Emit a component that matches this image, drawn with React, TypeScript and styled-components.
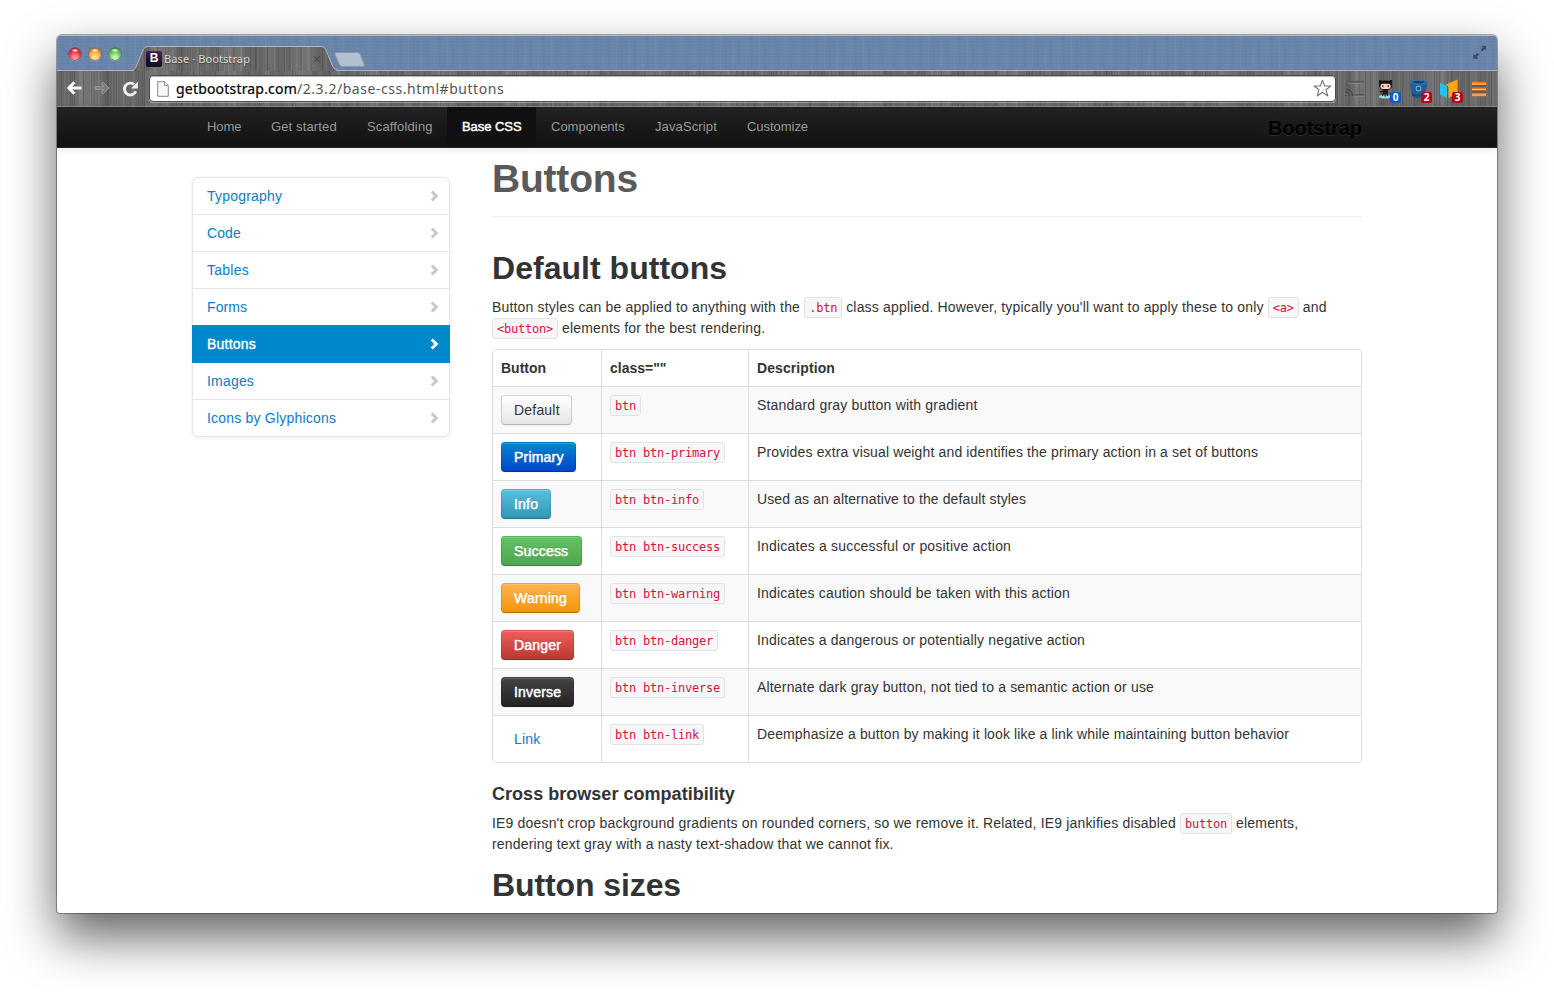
import React from "react";
import styled, { createGlobalStyle, css } from "styled-components";

const GlobalStyle = createGlobalStyle`
  * { box-sizing: border-box; }
  body { margin: 0; background: #fff; overflow: hidden; }
  #root { height: 992px; }
`;

const sans = `"Liberation Sans", Arial, sans-serif`;
const ui = `"Noto Sans", "Open Sans", sans-serif`;
const mono = `"DejaVu Sans Mono", "Liberation Mono", monospace`;

const brushed = css`
  background-color: #727272;
  background-image:
    repeating-linear-gradient(90deg, rgba(255,255,255,.06) 0 1px, transparent 1px 4px, rgba(0,0,0,.1) 4px 5px, transparent 5px 11px),
    repeating-linear-gradient(90deg, rgba(0,0,0,.1) 0 1px, transparent 1px 7px, rgba(255,255,255,.06) 7px 9px, transparent 9px 17px),
    repeating-linear-gradient(90deg, transparent 0 13px, rgba(0,0,0,.14) 13px 14px, transparent 14px 23px, rgba(255,255,255,.07) 23px 24px, transparent 24px 37px),
    repeating-linear-gradient(90deg, rgba(0,0,0,.1) 0 16px, transparent 22px 38px, rgba(0,0,0,.12) 46px 60px, rgba(0,0,0,.04) 66px 71px);
`;

const Desktop = styled.div`
  width: 1554px;
  height: 992px;
  padding: 35px 57px 0 57px;
  overflow: hidden;
`;

const Window = styled.main`
  height: 878px;
  border-radius: 5px 5px 3px 3px;
  overflow: hidden;
  background: #fff;
  display: flex;
  flex-direction: column;
  box-shadow: 0 0 0 1px rgba(0, 0, 0, .32), 0 24px 50px rgba(0, 0, 0, .62);
`;

const TabStrip = styled.header`
  flex: none;
  height: 36px;
  display: flex;
  align-items: flex-end;
  padding: 0 9px 0 12px;
  border-top: 1px solid #b9bcc0;
  background-color: #6883aa;
  background-image:
    repeating-linear-gradient(90deg, rgba(255,255,255,.03) 0 1px, transparent 1px 5px, rgba(0,0,0,.025) 5px 7px, transparent 7px 13px),
    repeating-linear-gradient(0deg, rgba(255,255,255,.03) 0 1px, transparent 1px 3px);
  box-shadow: inset 0 -1px #aeb3ba;
`;

const Lights = styled.div`
  display: flex;
  gap: 8px;
  width: 62px;
  padding-bottom: 11px;
`;

const Light = styled.span<{ $c: string; $dark: string; $lit: string }>`
  width: 12px;
  height: 12px;
  border-radius: 50%;
  background:
    radial-gradient(ellipse 4px 2px at 50% 20%, rgba(255,255,255,.95), rgba(255,255,255,0)),
    radial-gradient(circle at 50% 80%, ${p => p.$lit} 10%, ${p => p.$c} 55%, ${p => p.$dark} 100%);
  box-shadow: 0 0 0 .5px ${p => p.$dark}, 0 1px 1px rgba(255, 255, 255, .4);
`;

const Tab = styled.div`
  position: relative;
  width: 208px;
  height: 25px;
  display: flex;
  align-items: center;
  padding: 0 18px 0 15px;
`;

const TabSurface = styled.div`
  position: absolute;
  inset: 0;
  ${brushed}
  clip-path: path("M0 25 C3 25 4 23 5 21 L12 4 Q13.5 .5 17 .5 L190 .5 Q194 .5 195 4 L202 21 Q203.500 25 208 25 Z");
`;

const TabEdge = styled.svg`
  position: absolute;
  inset: 0;
`;

const TabTitle = styled.span`
  position: relative;
  flex: 1;
  padding-left: 2px;
  font: 11px/16px ${ui};
  letter-spacing: .1px;
  color: #dcdcdc;
  text-shadow: 0 1px 1px rgba(0, 0, 0, .4);
`;

const Favicon = styled.span`
  position: relative;
  width: 16px;
  height: 16px;
  border-radius: 2px;
  background: linear-gradient(200deg, #5a2358, #160a28 70%);
  color: #fff;
  font: bold 12px/15px ${sans};
  text-align: center;
`;

const Icon = styled.svg`
  position: relative;
  flex: none;
  display: block;
`;

const NewTab = styled(Icon)`
  margin: 0 auto 3px -6px;
`;

const Expand = styled(Icon)`
  margin-bottom: 11px;
`;

const Toolbar = styled.div`
  flex: none;
  height: 36px;
  display: flex;
  align-items: center;
  padding: 0 10px 0 9px;
  ${brushed}
  border-bottom: 1px solid #8a8a8a;
`;

const NavButtons = styled.div`
  display: flex;
  gap: 12px;
  width: 83px;
`;

const Omnibox = styled.div`
  width: 1187px;
  height: 27px;
  margin-right: 8px;
  display: flex;
  align-items: center;
  padding: 0 3px 0 7px;
  border: 1px solid #4c4c4c;
  border-radius: 4px;
  background: #fff;
  box-shadow: inset 0 1px 1px rgba(0, 0, 0, .3), 0 1px rgba(255, 255, 255, .35);
`;

const Url = styled.div`
  flex: 1;
  padding-left: 7px;
  font: 14px/20px ${ui};
  letter-spacing: .54px;
  color: #555;
  b { font-weight: 400; color: #000; letter-spacing: .19px; -webkit-text-stroke: .2px #000; }
`;

const Extensions = styled.div`
  display: flex;
  align-items: center;
`;

const Extension = styled.div<{ $w: number }>`
  position: relative;
  width: ${p => p.$w}px;
  height: 24px;
  display: flex;
  align-items: center;
`;

const Badge = styled.span<{ $c: string }>`
  position: absolute;
  left: 12px;
  bottom: -2px;
  width: 11px;
  height: 11px;
  border-radius: 2px;
  background: ${p => p.$c};
  color: #fff;
  font: bold 10px/11px ${ui};
  text-align: center;
`;

const Navbar = styled.nav`
  flex: none;
  height: 41px;
  display: flex;
  padding: 0 135px;
  background: linear-gradient(#222, #111);
  border-bottom: 1px solid #252525;
  box-shadow: 0 1px 10px rgba(0, 0, 0, .1);
  font: 13px/20px ${sans};
  z-index: 1;
`;

const NavItem = styled.a<{ $w: number; $ls: number; $active?: boolean }>`
  width: ${p => p.$w}px;
  padding: 10px 0 10px 15px;
  white-space: nowrap;
  letter-spacing: ${p => p.$ls}px;
  color: ${p => (p.$active ? "#fff" : "#999")};
  ${p => p.$active && css`
    background: #111;
    box-shadow: inset 0 3px 8px rgba(0, 0, 0, .125);
    -webkit-text-stroke: .45px #fff;
  `}
`;

const Brand = styled.a`
  margin-left: auto;
  padding: 11px 0 0;
  font: bold 20px/20px ${sans};
  letter-spacing: -.05px;
  color: #000;
  text-shadow: 0 1px 0 rgba(255, 255, 255, .1), 0 0 30px rgba(255, 255, 255, .125);
`;

const Page = styled.div`
  flex: 1;
  min-height: 0;
  overflow: hidden;
  display: flex;
  align-items: flex-start;
  gap: 42px;
  padding-left: 135px;
  font: 14px/20px ${sans};
  color: #333;
`;

const SideNav = styled.aside`
  width: 258px;
  margin-top: 29px;
  border-radius: 6px;
  box-shadow: 0 1px 4px rgba(0, 0, 0, .065);
`;

const SideLink = styled.a<{ $active?: boolean; $ls: number }>`
  display: flex;
  justify-content: space-between;
  align-items: center;
  height: 38px;
  padding: 0 10px 0 14px;
  border: 1px solid #e5e5e5;
  color: #0a7cc6;
  letter-spacing: ${p => p.$ls}px;
  & + & { margin-top: -1px; }
  &:first-child { border-radius: 6px 6px 0 0; }
  &:last-child { border-radius: 0 0 6px 6px; }
  ${p => p.$active && css`
    position: relative;
    z-index: 2;
    background: #08c;
    border-color: #08c;
    color: #fff;
    -webkit-text-stroke: .4px #fff;
    text-shadow: 0 1px 0 rgba(0, 0, 0, .15);
  `}
`;

const Article = styled.article`
  width: 870px;
`;

const Title = styled.h1`
  margin: 0;
  height: 69px;
  padding-top: 11px;
  border-bottom: 1px solid #eee;
  font: bold 39px/40px ${sans};
  letter-spacing: -.2px;
  color: #5a5a5a;
`;

const Heading = styled.h2<{ $top: number; $ls: number }>`
  margin: ${p => p.$top}px 0 9px;
  font: bold 32px/40px ${sans};
  letter-spacing: ${p => p.$ls}px;
`;

const SubHeading = styled.h4`
  margin: 21px 0 9px;
  font: bold 18px/20px ${sans};
  letter-spacing: .03px;
`;

const Line = styled.p`
  margin: 0;
  height: 21px;
  line-height: 21px;
  white-space: nowrap;
  letter-spacing: .172px;
`;

const Code = styled.code`
  display: inline-block;
  vertical-align: top;
  height: 21px;
  padding: 2px 4px;
  border: 1px solid #e1e1e8;
  border-radius: 3px;
  background: #f7f7f9;
  color: #d9103c;
  font: 12px/16px ${mono};
  letter-spacing: -.225px;
  white-space: pre;
`;

const Table = styled.div`
  margin-top: 10px;
  border: 1px solid #ddd;
  border-radius: 4px;
  overflow: hidden;
`;

const Row = styled.div<{ $odd?: boolean; $head?: boolean }>`
  display: grid;
  grid-template-columns: 108px 147px 1fr;
  height: ${p => (p.$head ? 36 : 47)}px;
  border-top: ${p => (p.$head ? "0" : "1px solid #ddd")};
  background: ${p => (p.$odd ? "#f9f9f9" : "#fff")};
  font-weight: ${p => (p.$head ? "bold" : "normal")};
`;

const Cell = styled.div<{ $ls?: number }>`
  padding: 8px;
  white-space: nowrap;
  letter-spacing: ${p => p.$ls ?? 0}px;
  & + & { border-left: 1px solid #ddd; }
`;

type Tone = { from: string; to: string; edge: string };

const Button = styled.button<{ $tone: Tone; $w: number; $kind: "light" | "solid" | "link" }>`
  display: block;
  width: ${p => p.$w}px;
  height: 30px;
  padding: 0 0 0 12px;
  border: 1px solid ${p => p.$tone.edge};
  border-radius: 4px;
  background: linear-gradient(${p => p.$tone.from}, ${p => p.$tone.to});
  font: 14px/20px ${sans};
  letter-spacing: .2px;
  text-align: left;
  white-space: nowrap;
  ${p => p.$kind === "light" && css`
    color: #333;
    border-color: #d4d4d4 #ccc #b3b3b3;
    text-shadow: 0 1px 1px rgba(255, 255, 255, .75);
    box-shadow: inset 0 1px 0 rgba(255, 255, 255, .2), 0 1px 2px rgba(0, 0, 0, .05);
  `}
  ${p => p.$kind === "solid" && css`
    color: #fff;
    -webkit-text-stroke: .5px #fff;
    border-color: rgba(0, 0, 0, .1) rgba(0, 0, 0, .1) rgba(0, 0, 0, .25);
    background-clip: border-box;
    background-origin: border-box;
    text-shadow: 0 -1px 0 rgba(0, 0, 0, .25);
    box-shadow: inset 0 1px 0 rgba(255, 255, 255, .2), 0 1px 2px rgba(0, 0, 0, .05);
  `}
  ${p => p.$kind === "link" && css`
    color: #0a7cc6;
    background: none;
    border-color: transparent;
  `}
`;

const navItems = [
  { label: "Home", w: 64, ls: -0.1 },
  { label: "Get started", w: 96, ls: 0.13 },
  { label: "Scaffolding", w: 95, ls: 0.14 },
  { label: "Base CSS", w: 89, ls: -0.05, active: true },
  { label: "Components", w: 104, ls: 0 },
  { label: "JavaScript", w: 92, ls: 0.12 },
  { label: "Customize", w: 91, ls: -0.04 },
];

const sideItems = [
  { label: "Typography", ls: 0.2 },
  { label: "Code", ls: 0.1 },
  { label: "Tables", ls: 0.24 },
  { label: "Forms", ls: 0.1 },
  { label: "Buttons", ls: 0.22, active: true },
  { label: "Images", ls: 0.19 },
  { label: "Icons by Glyphicons", ls: 0.2 },
];

type Kind = "light" | "solid" | "link";
const rows: { label: string; cls: string; text: string; ls: number; w: number; kind: Kind; tone: Tone }[] = [
  { label: "Default", cls: "btn", text: "Standard gray button with gradient", ls: 0.19, w: 71, kind: "light", tone: { from: "#fff", to: "#e6e6e6", edge: "#ccc" } },
  { label: "Primary", cls: "btn btn-primary", text: "Provides extra visual weight and identifies the primary action in a set of buttons", ls: 0.142, w: 75, kind: "solid", tone: { from: "#08c", to: "#04c", edge: "#04c" } },
  { label: "Info", cls: "btn btn-info", text: "Used as an alternative to the default styles", ls: 0.12, w: 50, kind: "solid", tone: { from: "#5bc0de", to: "#2f96b4", edge: "#2f96b4" } },
  { label: "Success", cls: "btn btn-success", text: "Indicates a successful or positive action", ls: 0.2, w: 81, kind: "solid", tone: { from: "#62c462", to: "#51a351", edge: "#51a351" } },
  { label: "Warning", cls: "btn btn-warning", text: "Indicates caution should be taken with this action", ls: 0.19, w: 79, kind: "solid", tone: { from: "#fbb450", to: "#f89406", edge: "#f89406" } },
  { label: "Danger", cls: "btn btn-danger", text: "Indicates a dangerous or potentially negative action", ls: 0.172, w: 73, kind: "solid", tone: { from: "#ee5f5b", to: "#bd362f", edge: "#bd362f" } },
  { label: "Inverse", cls: "btn btn-inverse", text: "Alternate dark gray button, not tied to a semantic action or use", ls: 0.173, w: 73, kind: "solid", tone: { from: "#444", to: "#222", edge: "#222" } },
  { label: "Link", cls: "btn btn-link", text: "Deemphasize a button by making it look like a link while maintaining button behavior", ls: 0.127, w: 53, kind: "link", tone: { from: "#fff", to: "#fff", edge: "#fff" } },
];

const Chevron = ({ active }: { active?: boolean }) => (
  <Icon width="9" height="12" viewBox="0 0 9 12">
    <path d="M1.700 1.500 6.300 6 1.700 10.500" fill="none" stroke={active ? "#fff" : "#c8c8c8"} strokeWidth="3" />
  </Icon>
);

const Arrow = ({ dim }: { dim?: boolean }) => (
  <Icon width="16" height="16" viewBox="0 0 16 16">
    <path
      d={dim ? "M1 6.500H10L7 3.800 8.800 1.900 15 8 8.800 14.100 7 12.200 10 9.500H1Z" : "M15.500 8H3M8.500 2.200 2.600 8l5.900 5.800"}
      fill={dim ? "#7c7c7c" : "none"}
      stroke={dim ? "#989898" : "#f6f6f6"}
      strokeWidth={dim ? 1 : 3}
      strokeLinejoin="round"
    />
  </Icon>
);

const TopChrome = () => (
  <>
    <TabStrip>
      <Lights>
        <Light $c="#e8323c" $dark="#8c0c18" $lit="#ff9aa0" />
        <Light $c="#f2a634" $dark="#92560c" $lit="#ffe38c" />
        <Light $c="#62c254" $dark="#2c7426" $lit="#c8f8b0" />
      </Lights>
      <Tab>
        <TabSurface />
        <TabEdge width="208" height="25" viewBox="0 0 208 25">
          <path d="M0 24.500C3 24.500 4 23 5 21L12 4Q13.500 .5 17 .5H190Q194 .5 195 4L202 21Q203.500 24.500 208 24.500" fill="none" stroke="#b4b7bb" />
        </TabEdge>
        <Favicon>B</Favicon>
        <TabTitle>Base · Bootstrap</TabTitle>
        <Icon width="8" height="8" viewBox="0 0 8 8">
          <path d="M.8.8 7.200 7.200M7.200.8.8 7.200" stroke="#484848" strokeWidth="1.100" />
        </Icon>
      </Tab>
      <NewTab width="33" height="17" viewBox="0 0 33 17">
        <path d="M3.500 1.500H24Q26.500 1.500 27.300 3.500L31.200 13.500Q31.700 15.500 30 15.500H9Q7.300 15.500 6.500 13.800L2 3.500Q1.500 1.500 3.500 1.500Z" fill="#b2c0d2" stroke="#8797ad" />
      </NewTab>
      <Expand width="16" height="16" viewBox="0 0 16 16">
        <path d="M8.500 1.500h6v6l-2-2-2.500 2.500-2-2 2.500-2.500ZM7 15H1V9l2 2 2.500-2.500 2 2L5 13Z" fill="#384a64" stroke="#8ba0bd" strokeWidth=".4" />
      </Expand>
    </TabStrip>
    <Toolbar>
      <NavButtons>
        <Arrow />
        <Arrow dim />
        <Icon width="17" height="18" viewBox="0 0 17 18">
          <path d="M13.800 11.400A5.900 5.900 0 1 1 12.200 4.500" fill="none" stroke="#eee" strokeWidth="2.900" />
          <path d="M16 1.500V8.500H9Z" fill="#eee" />
        </Icon>
      </NavButtons>
      <Omnibox>
        <Icon width="12" height="16" viewBox="0 0 12 16">
          <path d="M.7.7H7.500L11.300 4.500V15.300H.7Z" fill="#f7f7f7" stroke="#888" />
          <path d="M7.500.7V4.500H11.300" fill="#fff" stroke="#888" />
        </Icon>
        <Url><b>getbootstrap.com</b>/2.3.2/base-css.html#buttons</Url>
        <Icon width="19" height="19" viewBox="0 0 19 19">
          <path d="M9.500 1.300 11.700 7H17.900L13 10.800 14.800 17 9.500 13.300 4.200 17 6 10.800 1.100 7H7.300Z" fill="#fff" stroke="#777" strokeWidth="1.100" strokeLinejoin="round" />
        </Icon>
      </Omnibox>
      <Extensions>
        <Extension $w={34}>
          <Icon width="22" height="18" viewBox="0 0 22 18">
            <path d="M3 6V2H20M10 15H20" fill="none" stroke="#4e4e4e" strokeWidth="1.400" />
            <path d="M3 3.200H20M10 16.200H20" fill="none" stroke="#969696" strokeWidth=".8" />
            <path d="M1.500 9A7 7 0 0 1 8.500 16M1.500 12A4 4 0 0 1 5.500 16M1.500 15L2.500 16" fill="none" stroke="#4c4c4c" strokeWidth="1.600" />
          </Icon>
        </Extension>
        <Extension $w={31}>
          <Icon width="16" height="20" viewBox="0 0 16 20">
            <ellipse cx="7" cy="17.700" rx="6" ry="1.900" fill="#9bd7ee" />
            <path d="M5 10H10V17H8.700V14.500H7.800V17.500H6.500V14L5 17H4L5 13 2 13.500 1.500 12 4.500 12Z" fill="#15191c" />
            <path d="M1.200 .8 4 1.800Q7.500 1.100 11 1.800L13.800 .8Q14.500 3 13.900 4.500 15 8 12.500 9.700 10.500 11 7.500 11 4 11 2.300 9.500.2 7.500 1.200 4.500.7 3 1.200 .8Z" fill="#111" />
            <rect x="2.500" y="4.800" width="10.200" height="5.200" rx="2.300" fill="#f6cdb7" />
            <ellipse cx="4.900" cy="7.100" rx=".8" ry="1.200" fill="#5c3030" />
            <ellipse cx="10.200" cy="7.100" rx=".8" ry="1.200" fill="#5c3030" />
          </Icon>
          <Badge $c="#0a5fc4">0</Badge>
        </Extension>
        <Extension $w={31}>
          <Icon width="19" height="20" viewBox="0 0 19 20">
            <path d="M.5 3 3 16.500Q4 19.500 9.500 19.500T16 16.500L18.500 3Z" fill="#235d93" />
            <path d="M3 14.500Q9.500 17 16 14.500L15.600 16.500Q9.500 18.500 3.400 16.500Z" fill="#184673" />
            <ellipse cx="9.500" cy="3.200" rx="9" ry="2.700" fill="#3173a8" />
            <ellipse cx="9.500" cy="3.200" rx="6.500" ry="1.300" fill="#173f68" />
            <circle cx="9.500" cy="9.500" r="2.300" fill="#1b4e80" stroke="#76a8cd" strokeWidth="1.200" />
          </Icon>
          <Badge $c="#b5061c">2</Badge>
        </Extension>
        <Extension $w={32}>
          <Icon width="19" height="20" viewBox="0 0 19 20">
            <path d="M0 4 7 7V19L0 15.500Z" fill="#1cc4f4" />
            <path d="M6 5.500 17.500 .5V14L8.500 19V8Z" fill="#fba90a" />
          </Icon>
          <Badge $c="#b5061c">3</Badge>
        </Extension>
        <Icon width="14" height="16" viewBox="0 0 14 16">
          <path d="M0 2.500H14M0 8H14M0 13.500H14" stroke="#f0761a" strokeWidth="3.400" />
          <path d="M0 3H14M0 8.500H14M0 14H14" stroke="#ffc79a" strokeWidth="1" />
          <path d="M0 5.250H14M0 10.750H14" stroke="#5a5a5a" strokeWidth="1.800" />
        </Icon>
      </Extensions>
    </Toolbar>
  </>
);

export default function App() {
  return (
    <Desktop>
      <GlobalStyle />
      <Window>
        <TopChrome />
        <Navbar>
          {navItems.map(n => (
            <NavItem key={n.label} $w={n.w} $ls={n.ls} $active={n.active}>{n.label}</NavItem>
          ))}
          <Brand>Bootstrap</Brand>
        </Navbar>
        <Page>
          <SideNav>
            {sideItems.map(s => (
              <SideLink key={s.label} $ls={s.ls} $active={s.active}>
                {s.label}
                <Chevron active={s.active} />
              </SideLink>
            ))}
          </SideNav>
          <Article>
            <Title>Buttons</Title>
            <Heading $top={31} $ls={0.03}>Default buttons</Heading>
            <Line>
              Button styles can be applied to anything with the <Code>.btn</Code> class applied. However, typically you'll want to apply these to only <Code>&lt;a&gt;</Code> and
            </Line>
            <Line><Code>&lt;button&gt;</Code> elements for the best rendering.</Line>
            <Table>
              <Row $head>
                <Cell>Button</Cell>
                <Cell>class=""</Cell>
                <Cell $ls={0.08}>Description</Cell>
              </Row>
              {rows.map((r, i) => (
                <Row key={r.label} $odd={i % 2 === 0}>
                  <Cell><Button $tone={r.tone} $w={r.w} $kind={r.kind}>{r.label}</Button></Cell>
                  <Cell><Code>{r.cls}</Code></Cell>
                  <Cell $ls={r.ls}>{r.text}</Cell>
                </Row>
              ))}
            </Table>
            <SubHeading>Cross browser compatibility</SubHeading>
            <Line>
              IE9 doesn't crop background gradients on rounded corners, so we remove it. Related, IE9 jankifies disabled <Code>button</Code> elements,
            </Line>
            <Line>rendering text gray with a nasty text-shadow that we cannot fix.</Line>
            <Heading $top={10} $ls={-0.1}>Button sizes</Heading>
          </Article>
        </Page>
      </Window>
    </Desktop>
  );
}
